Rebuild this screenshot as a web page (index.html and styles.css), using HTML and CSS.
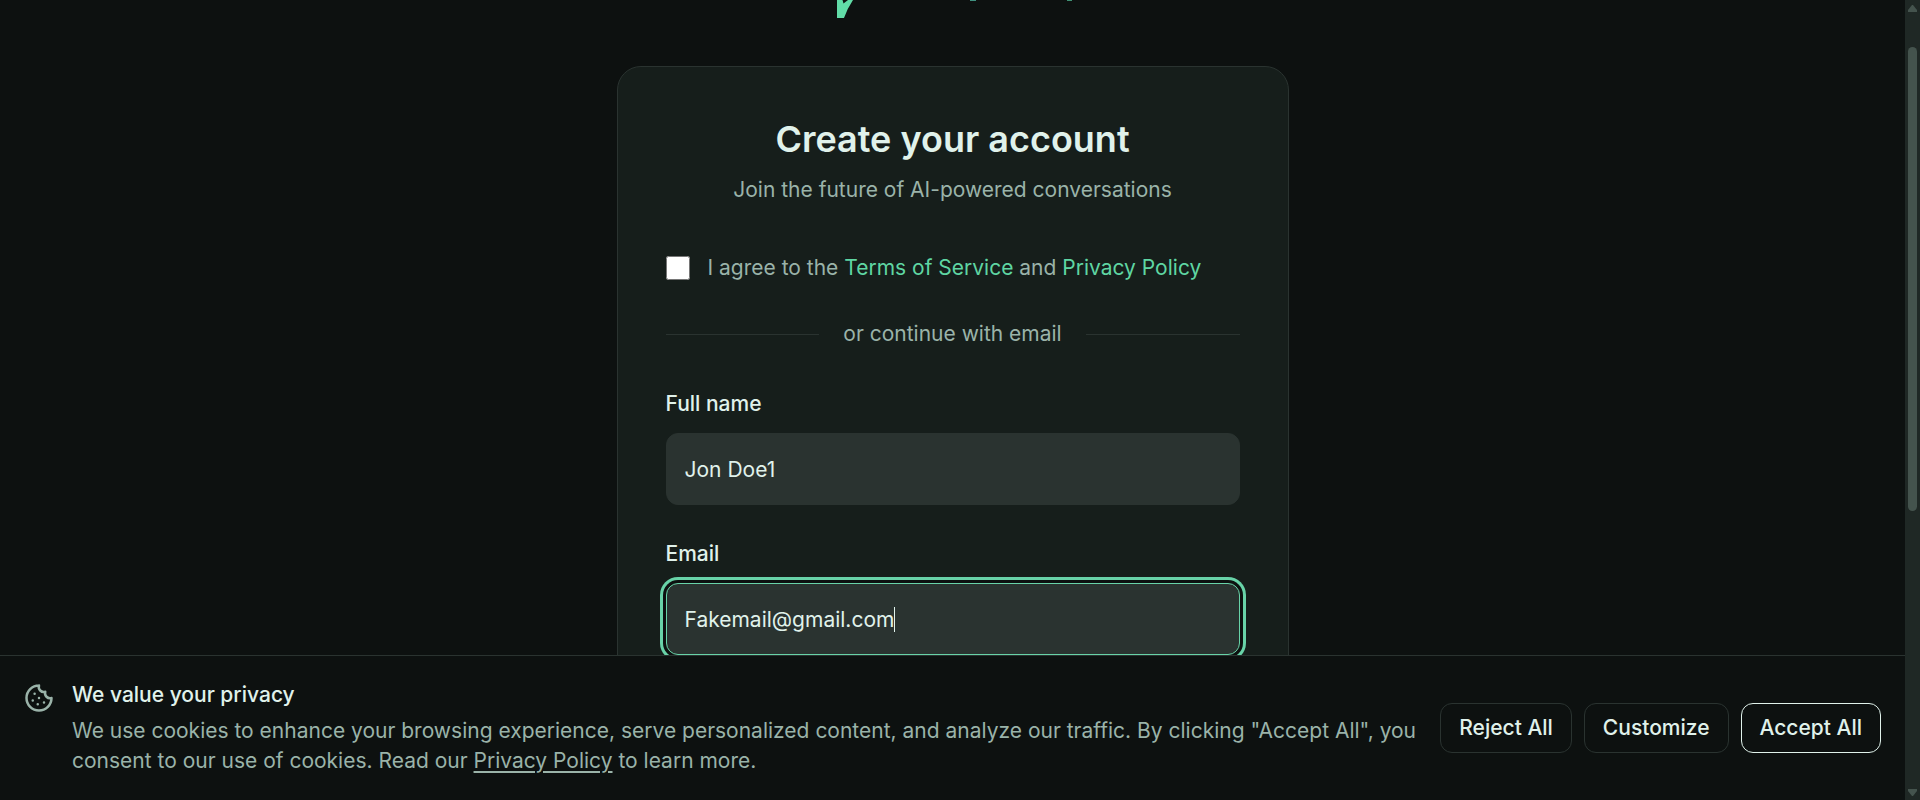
FILE: index.html
```html
<!DOCTYPE html>
<html lang="en">
<head>
<meta charset="utf-8">
<meta name="viewport" content="width=device-width, initial-scale=1">
<title>Create your account</title>
<link rel="stylesheet" href="styles.css">
</head>
<body>
<div class="app">
  <div class="page">
    <header class="brand">
      <svg class="brand-logo" viewBox="0 0 236 18" width="236" height="18" aria-hidden="true">
        <path d="M0 0V18H7Q10 9 16 0H11L6.500 3.500L5.500 0Z" fill="#61dca7"/>
        <path d="M133 0h6v1h-6z" fill="#3f9180"/>
        <path d="M230 0h5v1h-5z" fill="#3f9174"/>
      </svg>
    </header>
    <main class="card">
      <div class="card-head">
        <h1 class="title">Create your account</h1>
        <p class="subtitle">Join the future of AI-powered conversations</p>
      </div>
      <form class="form">
        <div class="agree">
          <input class="check" type="checkbox" id="agree">
          <label for="agree">I agree to the <a class="link" href="#terms">Terms of Service</a> and <a class="link" href="#privacy">Privacy Policy</a></label>
        </div>
        <div class="divider">or continue with email</div>
        <div class="fields">
          <div class="field">
            <label class="label" for="name">Full name</label>
            <input class="input" type="text" id="name" value="Jon Doe1">
          </div>
          <div class="field">
            <label class="label" for="email">Email</label>
            <div class="control">
              <input class="input input-active" type="email" id="email" value="Fakemail@gmail.com">
              <span class="caret"></span>
            </div>
          </div>
        </div>
      </form>
    </main>
    <section class="consent" aria-label="Cookie consent">
      <svg class="cookie" viewBox="0 0 24 24" width="30" height="30" fill="none" stroke="currentColor" stroke-width="2" stroke-linecap="round" stroke-linejoin="round" aria-hidden="true">
        <path d="M12 2a10 10 0 1 0 10 10 4 4 0 0 1-5-5 4 4 0 0 1-5-5"/>
        <path d="M8.500 8.500v.01M16 15.500v.01M12 12v.01M11 17v.01M7 14v.01"/>
      </svg>
      <div class="consent-text">
        <h2 class="consent-title">We value your privacy</h2>
        <p class="consent-body">We use cookies to enhance your browsing experience, serve personalized content, and analyze our traffic. By clicking "Accept All", you consent to our use of cookies. Read our <a class="consent-link" href="#privacy">Privacy Policy</a> to learn more.</p>
      </div>
      <div class="actions">
        <button class="btn" type="button">Reject All</button>
        <button class="btn" type="button">Customize</button>
        <button class="btn btn-primary" type="button">Accept All</button>
      </div>
    </section>
  </div>
  <div class="scrollbar" aria-hidden="true">
    <svg width="9" height="7" viewBox="0 0 9 7"><path d="M4 0h1l4 5v2H0V5z" fill="#44534d"/></svg>
    <div class="track"><div class="thumb"></div></div>
    <svg width="9" height="7" viewBox="0 0 9 7"><path d="M0 0h9v2L5 7H4L0 2z" fill="#44534d"/></svg>
  </div>
</div>
</body>
</html>
```
FILE: styles.css
```css
* { box-sizing: border-box; }

body {
  margin: 0;
  background: #0d1110;
  color: #e0f2eb;
  font: 400 21px/30px Inter, "Liberation Sans", sans-serif;
}

h1, h2, p { margin: 0; }

.app {
  display: flex;
  height: 100vh;
  overflow: hidden;
}

.page {
  position: relative;
  flex: 1;
  display: flex;
  flex-direction: column;
  align-items: center;
  min-width: 0;
  overflow: hidden;
}

.brand {
  flex: none;
  width: 100%;
  max-width: 231px;
  height: 66px;
}

.brand-logo { display: block; }

.card {
  flex: none;
  width: 100%;
  max-width: 672px;
  min-height: 100%;
  padding: 48px;
  border: 1px solid #2a3330;
  border-radius: 24px;
  background: #161e1b;
}

.card-head { text-align: center; }

.title {
  margin-bottom: 12px;
  font-size: 36px;
  line-height: 48px;
  font-weight: 600;
}

.subtitle { color: #9ab3a9; }

.agree {
  display: flex;
  align-items: center;
  gap: 18px;
  margin-top: 48px;
  color: #9ab3a9;
}

.check {
  width: 24px;
  height: 24px;
  margin: 0;
}

.link {
  color: #5fd6a3;
  text-decoration: none;
}

.divider {
  display: flex;
  align-items: center;
  gap: 24px;
  margin: 36px 0 42px;
  color: #9ab3a9;
}

.divider::before,
.divider::after {
  content: "";
  flex: 1;
  height: 1px;
  background: #2a3330;
}

.fields {
  display: grid;
  gap: 36px;
}

.field {
  display: grid;
  gap: 16px;
}

.label {
  line-height: 26px;
  font-weight: 500;
}

.control { position: relative; }

.input {
  display: block;
  width: 100%;
  height: 72px;
  padding: 0 18px;
  border: 1px solid #2a3330;
  border-radius: 12px;
  outline: none;
  background: #2a3330;
  color: inherit;
  font: inherit;
}

.input-active {
  border-color: #68d3a8;
  box-shadow: 0 0 0 3px #0d1110, 0 0 0 6px #68d3a8;
}

.caret {
  position: absolute;
  top: 24px;
  left: 228px;
  width: 1px;
  height: 25px;
  background: #e0f2eb;
}

.consent {
  position: absolute;
  right: 0;
  bottom: 0;
  left: 0;
  display: flex;
  align-items: center;
  padding: 24px;
  border-top: 1px solid #2a3330;
  background: #0d1110;
}

.cookie {
  flex: none;
  align-self: flex-start;
  margin: 3px 18px 0 0;
  color: #9ab3a9;
}

.consent-text {
  flex: 1;
  margin-right: 24px;
}

.consent-title {
  margin-bottom: 6px;
  font-size: 21px;
  line-height: 30px;
  font-weight: 500;
}

.consent-body { color: #9ab3a9; }

.consent-link {
  color: inherit;
  text-underline-offset: 3px;
}

.actions {
  display: flex;
  flex: none;
  gap: 12px;
}

.btn {
  height: 50px;
  padding: 0 18px;
  border: 1px solid #2a3330;
  border-radius: 12px;
  background: transparent;
  color: inherit;
  font: inherit;
  font-weight: 500;
}

.btn-primary { border-color: #e0f2eb; }

.scrollbar {
  display: flex;
  flex: none;
  flex-direction: column;
  align-items: center;
  gap: 6px;
  width: 15px;
  padding: 5px 0 4px;
  background: #1f2825;
}

.track {
  flex: 1;
  width: 9px;
  padding-top: 29px;
}

.thumb {
  height: 63%;
  border-radius: 5px;
  background: #44534d;
}
```
